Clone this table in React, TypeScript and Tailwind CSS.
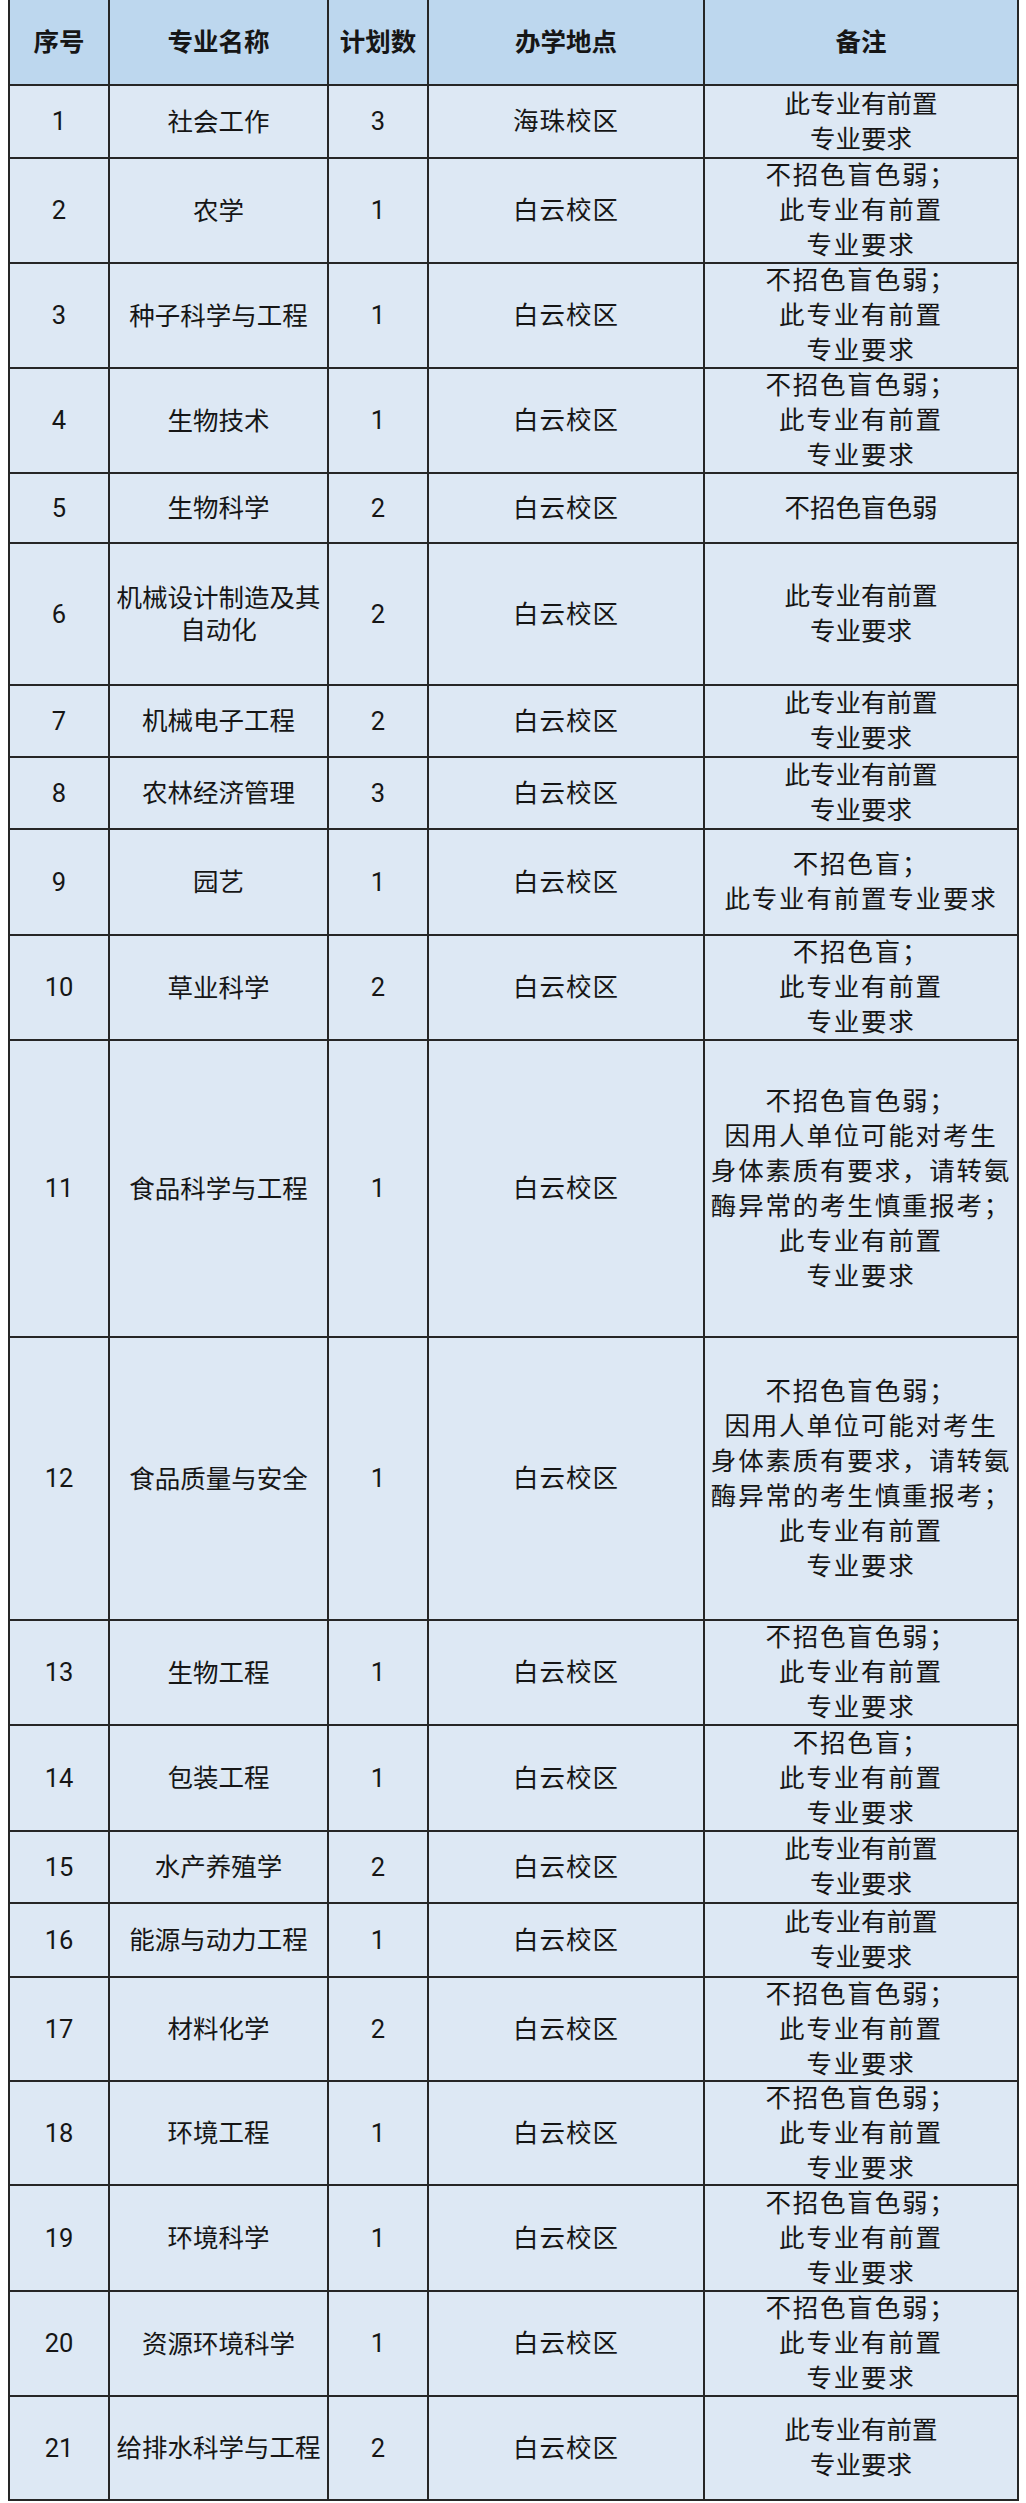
import React from "react";

type Row = {
  no: string;
  name: string[];
  plan: string;
  place: string;
  note: string[];
  h: number;
  wide?: boolean;
};

const A = ["不招色盲色弱；", "此专业有前置", "专业要求"];
const B = ["此专业有前置", "专业要求"];
const C = ["不招色盲；", "此专业有前置", "专业要求"];
const F = [
  "不招色盲色弱；",
  "因用人单位可能对考生",
  "身体素质有要求，请转氨",
  "酶异常的考生慎重报考；",
  "此专业有前置",
  "专业要求",
];

const rows: Row[] = [
  { no: "1", name: ["社会工作"], plan: "3", place: "海珠校区", note: B, h: 73 },
  { no: "2", name: ["农学"], plan: "1", place: "白云校区", note: A, h: 105, wide: true },
  { no: "3", name: ["种子科学与工程"], plan: "1", place: "白云校区", note: A, h: 105, wide: true },
  { no: "4", name: ["生物技术"], plan: "1", place: "白云校区", note: A, h: 105, wide: true },
  { no: "5", name: ["生物科学"], plan: "2", place: "白云校区", note: ["不招色盲色弱"], h: 70 },
  { no: "6", name: ["机械设计制造及其", "自动化"], plan: "2", place: "白云校区", note: B, h: 142 },
  { no: "7", name: ["机械电子工程"], plan: "2", place: "白云校区", note: B, h: 72 },
  { no: "8", name: ["农林经济管理"], plan: "3", place: "白云校区", note: B, h: 72 },
  { no: "9", name: ["园艺"], plan: "1", place: "白云校区", note: ["不招色盲；", "此专业有前置专业要求"], h: 106, wide: true },
  { no: "10", name: ["草业科学"], plan: "2", place: "白云校区", note: C, h: 105, wide: true },
  { no: "11", name: ["食品科学与工程"], plan: "1", place: "白云校区", note: F, h: 297, wide: true },
  { no: "12", name: ["食品质量与安全"], plan: "1", place: "白云校区", note: F, h: 283, wide: true },
  { no: "13", name: ["生物工程"], plan: "1", place: "白云校区", note: A, h: 105, wide: true },
  { no: "14", name: ["包装工程"], plan: "1", place: "白云校区", note: C, h: 106, wide: true },
  { no: "15", name: ["水产养殖学"], plan: "2", place: "白云校区", note: B, h: 72 },
  { no: "16", name: ["能源与动力工程"], plan: "1", place: "白云校区", note: B, h: 74 },
  { no: "17", name: ["材料化学"], plan: "2", place: "白云校区", note: A, h: 104, wide: true },
  { no: "18", name: ["环境工程"], plan: "1", place: "白云校区", note: A, h: 104, wide: true },
  { no: "19", name: ["环境科学"], plan: "1", place: "白云校区", note: A, h: 106, wide: true },
  { no: "20", name: ["资源环境科学"], plan: "1", place: "白云校区", note: A, h: 105, wide: true },
  { no: "21", name: ["给排水科学与工程"], plan: "2", place: "白云校区", note: B, h: 104 },
];

const cell =
  "flex flex-col items-center justify-center text-center border-r-2 border-b-2 border-[#262626] whitespace-nowrap";

export default function App() {
  return (
    <div
      className="w-[1026px] h-[2503px] bg-white flex pl-[8px] text-[#161616]"
      style={{ fontFamily: 'Roboto, "Noto Sans CJK SC", "Noto Sans", sans-serif' }}
    >
      <div className="flex flex-col border-l-2 border-[#262626] h-[2501px]">
        <div className="flex h-[86px] bg-[#bdd7ee] font-bold text-[25.5px]">
          <div className={`${cell} w-[100px]`}>序号</div>
          <div className={`${cell} w-[219px]`}>专业名称</div>
          <div className={`${cell} w-[100px]`}>计划数</div>
          <div className={`${cell} w-[276px]`}>办学地点</div>
          <div className={`${cell} w-[314px]`}>备注</div>
        </div>
        {rows.map((r) => (
          <div
            key={r.no}
            className="flex bg-[#dde8f4] text-[25.5px]"
            style={{ height: r.h }}
          >
            <div className={`${cell} w-[100px]`}>{r.no}</div>
            <div className={`${cell} w-[219px] leading-[32px]`}>
              {r.name.map((t, i) => (
                <span key={i}>{t}</span>
              ))}
            </div>
            <div className={`${cell} w-[100px]`}>{r.plan}</div>
            <div className={`${cell} w-[276px] tracking-[1px]`}>{r.place}</div>
            <div
              className={`${cell} w-[314px] leading-[35px] ${
                r.wide ? "tracking-[1.8px]" : ""
              }`}
            >
              {r.note.map((t, i) => (
                <span key={i}>{t}</span>
              ))}
            </div>
          </div>
        ))}
      </div>
    </div>
  );
}
